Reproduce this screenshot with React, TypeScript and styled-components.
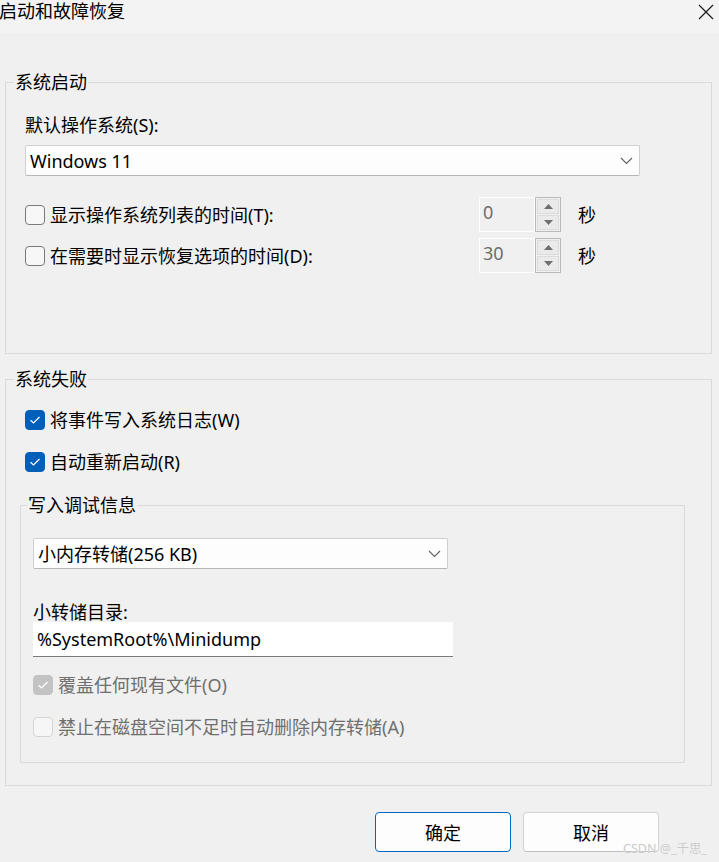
import React from "react";
import styled, { createGlobalStyle } from "styled-components";

const Global = createGlobalStyle`
  html, body { margin: 0; padding: 0; background: #f0f0f0; }
  body { font-family: "Noto Sans", "Noto Sans CJK SC", sans-serif; }
  * { box-sizing: border-box; }
`;

const Window = styled.div`
  position: relative;
  width: 719px;
  height: 862px;
  overflow: hidden;
  background: #f0f0f0;
  color: #000;
  font-size: 18px;
  display: flex;
  flex-direction: column;
`;

const TitleBar = styled.div`
  height: 33px;
  background: #f3f3f3;
  display: flex;
  justify-content: space-between;
  align-items: flex-start;
`;

const Title = styled.div`
  margin-left: -1px;
  line-height: 23px;
  font-size: 18px;
`;

const Close = styled.svg`
  margin: 4px 5px 0 0;
  width: 16px;
  height: 16px;
`;

const Content = styled.div`
  display: flex;
  flex-direction: column;
  padding: 0 7px 0 5px;
`;

const Group = styled.fieldset<{ $mt: number; $ml?: number; $mr?: number; $mb?: number }>`
  margin: ${(p) => p.$mt}px ${(p) => p.$mr ?? 0}px ${(p) => p.$mb ?? 0}px ${(p) => p.$ml ?? 0}px;
  padding: 0;
  min-width: 0;
  border: 1px solid #dadada;
`;

const Legend = styled.legend<{ $ml: number }>`
  margin-left: ${(p) => p.$ml}px;
  padding: 0 1px;
  line-height: 24px;
  font-size: 18px;
`;

const Body = styled.div<{ $pt: number; $pl: number; $pb: number; $pr?: number }>`
  display: flex;
  flex-direction: column;
  align-items: flex-start;
  padding: ${(p) => p.$pt}px ${(p) => p.$pr ?? 0}px ${(p) => p.$pb}px ${(p) => p.$pl}px;
`;

const FieldLabel = styled.div<{ $mt?: number; $lh?: number }>`
  margin-top: ${(p) => p.$mt ?? 0}px;
  line-height: ${(p) => p.$lh ?? 24}px;
`;

const Combo = styled.div<{ $w: number; $mt: number }>`
  margin-top: ${(p) => p.$mt}px;
  width: ${(p) => p.$w}px;
  height: 31px;
  background: #fdfdfd;
  border: 1px solid #cfcfcf;
  border-bottom-color: #b6b6b6;
  border-radius: 2px;
  display: flex;
  align-items: center;
  justify-content: space-between;
  padding: 0 6px 0 4px;
  line-height: 24px;
`;

const TextInput = styled.div<{ $w: number }>`
  width: ${(p) => p.$w}px;
  height: 35px;
  background: #fff;
  border-bottom: 1px solid #7a7a7a;
  display: flex;
  align-items: center;
  padding: 0 4px;
  line-height: 24px;
`;

const Row = styled.div<{ $mt: number; $h?: number }>`
  margin-top: ${(p) => p.$mt}px;
  height: ${(p) => p.$h ?? 24}px;
  display: flex;
  align-items: center;
`;

const CheckLabel = styled.label<{ $w?: number; $disabled?: boolean }>`
  display: flex;
  align-items: center;
  gap: 5px;
  width: ${(p) => (p.$w ? `${p.$w}px` : "auto")};
  line-height: 24px;
  color: ${(p) => (p.$disabled ? "#6f6f6f" : "#000")};
`;

type BoxState = "off" | "on" | "disabledOn" | "disabledOff";

const Box = styled.span<{ $state: BoxState }>`
  flex: none;
  width: 20px;
  height: 20px;
  border-radius: 4px;
  display: flex;
  align-items: center;
  justify-content: center;
  background: ${(p) =>
    p.$state === "on" ? "#005fb8" : p.$state === "disabledOn" ? "#c3c3c3" : p.$state === "disabledOff" ? "#f6f6f6" : "#f7f7f7"};
  border: 1px solid
    ${(p) =>
      p.$state === "on" ? "#005fb8" : p.$state === "disabledOn" ? "#c3c3c3" : p.$state === "disabledOff" ? "#d4d4d4" : "#7a7a7a"};
`;

const Spin = styled.div`
  display: flex;
  height: 35px;
`;

const SpinField = styled.div`
  width: 56px;
  height: 35px;
  border: 1px solid #ffffff;
  background: #f0f0f0;
  color: #6d6d6d;
  padding: 0 3px;
  line-height: 28px;
`;

const SpinButtons = styled.div`
  width: 26px;
  height: 35px;
  border: 1px solid #b9b9b9;
  padding: 1px;
  display: flex;
  flex-direction: column;
  gap: 1px;
`;

const SpinBtn = styled.div`
  flex: 1;
  background: #eaeaea;
  border: 1px solid #dcdcdc;
  display: flex;
  align-items: center;
  justify-content: center;
`;

const Unit = styled.span`
  margin-left: 17px;
  line-height: 24px;
`;

const Footer = styled.div`
  display: flex;
  justify-content: flex-end;
  gap: 12px;
  margin-top: 26px;
  padding-right: 53px;
`;

const Button = styled.button<{ $primary?: boolean }>`
  width: 136px;
  height: 40px;
  font: inherit;
  font-size: 18px;
  color: #000;
  background: #fdfdfd;
  border-radius: 4px;
  border: 1px solid ${(p) => (p.$primary ? "#0067c0" : "#d3d3d3")};
  border-bottom-color: ${(p) => (p.$primary ? "#0067c0" : "#bdbdbd")};
  padding: 0;
`;

const Watermark = styled.div`
  position: absolute;
  right: 12px;
  bottom: 5px;
  font-size: 12.5px;
  color: #cacaca;
  text-shadow: 0 0 1px #fff;
`;

const Chevron = () => (
  <svg width="13" height="8" viewBox="0 0 13 8">
    <path d="M1 1 L6.5 6.5 L12 1" fill="none" stroke="#606060" strokeWidth="1.1" />
  </svg>
);

const Tick = ({ color = "#fff" }: { color?: string }) => (
  <svg width="12" height="10" viewBox="0 0 12 10">
    <path d="M1.5 5.2 L4.5 8 L10.5 2" fill="none" stroke={color} strokeWidth="1.2" />
  </svg>
);

const Arrow = ({ up }: { up?: boolean }) => (
  <svg width="9" height="5" viewBox="0 0 9 5">
    <path d={up ? "M0 5 L4.5 0 L9 5 Z" : "M0 0 L9 0 L4.5 5 Z"} fill="#6f6f6f" />
  </svg>
);

const Check = ({ state, children, width }: { state: BoxState; children: React.ReactNode; width?: number }) => (
  <CheckLabel $w={width} $disabled={state === "disabledOn" || state === "disabledOff"}>
    <Box $state={state}>{(state === "on" || state === "disabledOn") && <Tick />}</Box>
    {children}
  </CheckLabel>
);

const Spinner = ({ value }: { value: string }) => (
  <Spin>
    <SpinField>{value}</SpinField>
    <SpinButtons>
      <SpinBtn>
        <Arrow up />
      </SpinBtn>
      <SpinBtn>
        <Arrow />
      </SpinBtn>
    </SpinButtons>
  </Spin>
);

export default function App() {
  return (
    <Window>
      <Global />
      <TitleBar>
        <Title>启动和故障恢复</Title>
        <Close viewBox="0 0 16 16">
          <path d="M1 1 L15 15 M15 1 L1 15" stroke="#1a1a1a" strokeWidth="1.2" />
        </Close>
      </TitleBar>
      <Content>
        <Group $mt={37}>
          <Legend $ml={8}>系统启动</Legend>
          <Body $pt={19} $pl={19} $pb={80}>
            <FieldLabel>默认操作系统(S):</FieldLabel>
            <Combo $w={615} $mt={8}>
              <span>Windows 11</span>
              <Chevron />
            </Combo>
            <Row $mt={21} $h={35}>
              <Check state="off" width={454}>显示操作系统列表的时间(T):</Check>
              <Spinner value="0" />
              <Unit>秒</Unit>
            </Row>
            <Row $mt={6} $h={35}>
              <Check state="off" width={454}>在需要时显示恢复选项的时间(D):</Check>
              <Spinner value="30" />
              <Unit>秒</Unit>
            </Row>
          </Body>
        </Group>

        <Group $mt={13}>
          <Legend $ml={8}>系统失败</Legend>
          <Body $pt={17} $pl={19} $pb={22}>
            <Row $mt={0}>
              <Check state="on">将事件写入系统日志(W)</Check>
            </Row>
            <Row $mt={18}>
              <Check state="on">自动重新启动(R)</Check>
            </Row>
          </Body>
          <Group $mt={-3} $ml={14} $mr={26} $mb={22}>
            <Legend $ml={6}>写入调试信息</Legend>
            <Body $pt={21} $pl={12} $pb={23}>
              <Combo $w={415} $mt={0}>
                <span>小内存转储(256 KB)</span>
                <Chevron />
              </Combo>
              <FieldLabel $mt={33} $lh={20}>小转储目录:</FieldLabel>
              <TextInput $w={420}>%SystemRoot%\Minidump</TextInput>
              <Row $mt={16}>
                <Check state="disabledOn">覆盖任何现有文件(O)</Check>
              </Row>
              <Row $mt={18}>
                <Check state="disabledOff">禁止在磁盘空间不足时自动删除内存转储(A)</Check>
              </Row>
            </Body>
          </Group>
        </Group>

        <Footer>
          <Button $primary>确定</Button>
          <Button>取消</Button>
        </Footer>
      </Content>
      <Watermark>CSDN @_千思_</Watermark>
    </Window>
  );
}
